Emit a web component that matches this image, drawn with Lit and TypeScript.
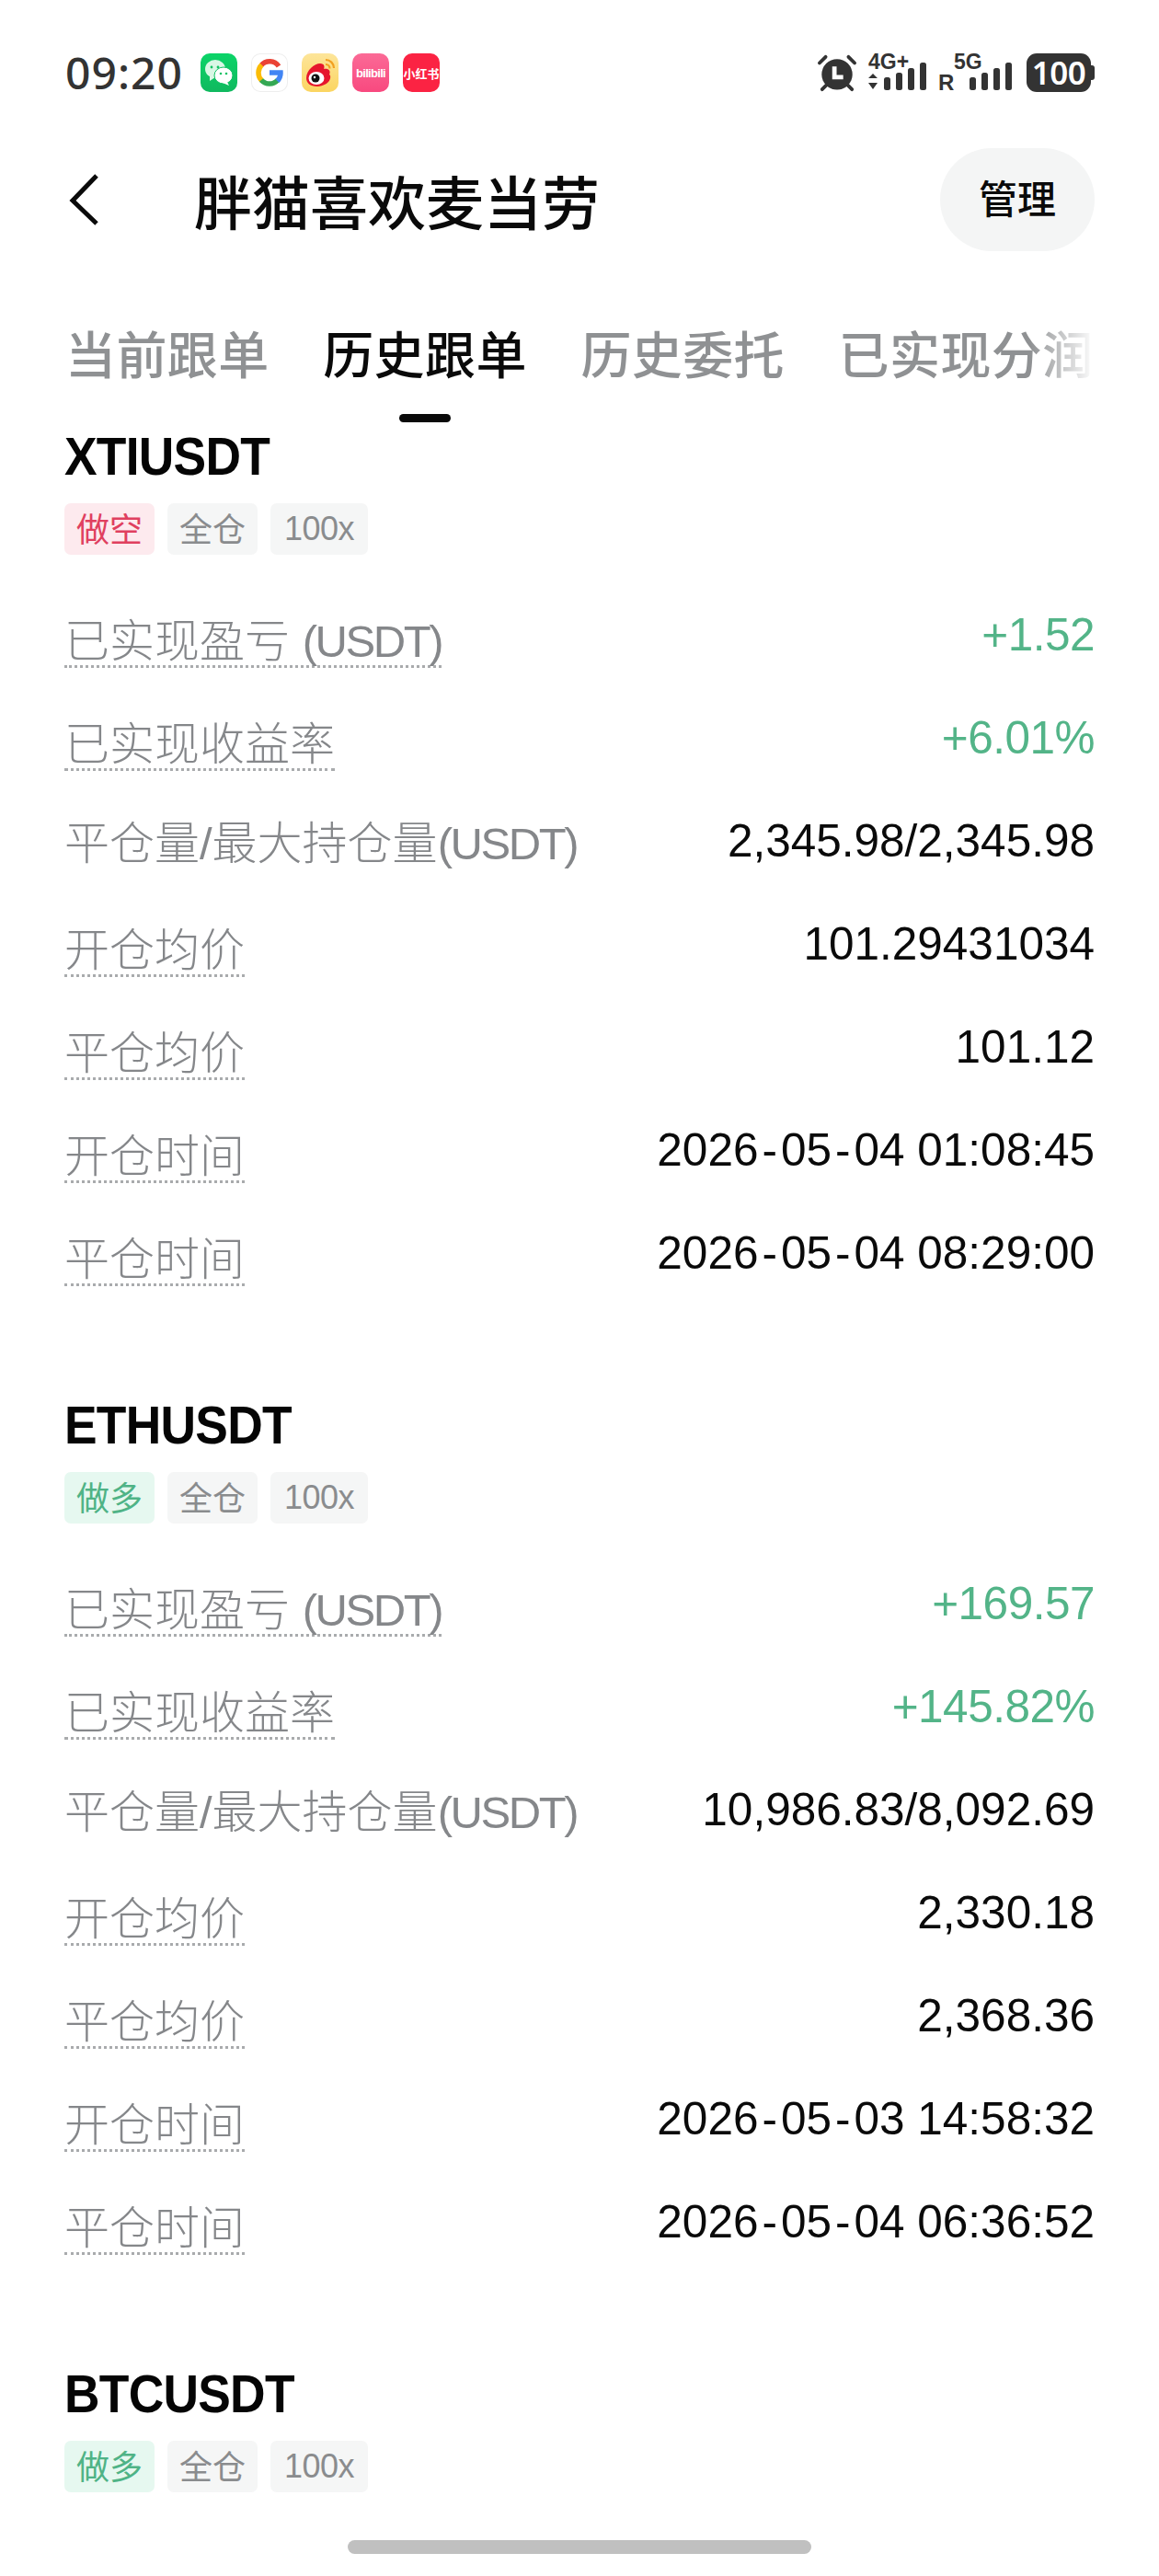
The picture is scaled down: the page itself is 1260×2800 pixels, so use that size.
import { LitElement, html, css, svg } from "lit";
import { customElement } from "lit/decorators.js";

type Row = { label: string; unit?: string; value: string; dotted?: boolean; green?: boolean };
type Card = { symbol: string; side: "long" | "short"; rows: Row[] };

const mk = (a: string, b: string, c: string, d: string, e: string, f: string, g: string): Row[] => [
  { label: "已实现盈亏 ", unit: "(USDT)", value: a, dotted: true, green: true },
  { label: "已实现收益率", value: b, dotted: true, green: true },
  { label: "平仓量/最大持仓量", unit: "(USDT)", value: c },
  { label: "开仓均价", value: d, dotted: true },
  { label: "平仓均价", value: e, dotted: true },
  { label: "开仓时间", value: f, dotted: true },
  { label: "平仓时间", value: g, dotted: true },
];

const CARDS: Card[] = [
  { symbol: "XTIUSDT", side: "short", rows: mk("+1.52", "+6.01%", "2,345.98/2,345.98", "101.29431034", "101.12", "2026-05-04 01:08:45", "2026-05-04 08:29:00") },
  { symbol: "ETHUSDT", side: "long", rows: mk("+169.57", "+145.82%", "10,986.83/8,092.69", "2,330.18", "2,368.36", "2026-05-03 14:58:32", "2026-05-04 06:36:52") },
  { symbol: "BTCUSDT", side: "long", rows: [] },
];

const TABS = ["当前跟单", "历史跟单", "历史委托", "已实现分润"];

const bars = svg`<rect x="0" y="14" width="7" height="14" rx="2.5"/><rect x="13" y="9" width="7" height="19" rx="2.5"/><rect x="26" y="4" width="7" height="24" rx="2.5"/><rect x="39" y="-2" width="7" height="30" rx="2.5"/>`;

@customElement("app-root")
export class AppRoot extends LitElement {
  static styles = css`
    :host { display: block; position: relative; width: 1260px; height: 2800px; overflow: hidden; background: #fff;
      font-family: "Liberation Sans", "Noto Sans CJK SC", sans-serif; color: #0a0a0a; }
    .status { display: flex; align-items: center; height: 46px; padding: 56px 70px 0 71px; }
    .time { font-family: "Noto Sans", "Liberation Sans", sans-serif; font-size: 48px; font-weight: 500; color: #333; letter-spacing: 1px; line-height: 46px; width: 147px; }
    .apps { display: flex; gap: 15px; }
    .app { width: 40px; height: 42px; border-radius: 10px; display: flex; align-items: center; justify-content: center; overflow: hidden; }
    .app svg { display: block; }
    .wechat { background: linear-gradient(#0bd468, #10b95f); }
    .google { background: #fff; box-shadow: inset 0 0 0 1px #eee; }
    .weibo { background: linear-gradient(#fde59a, #fbd561); }
    .bili { background: linear-gradient(#fb6a96, #f8497f); color: #fff; font-size: 13px; font-weight: 700; letter-spacing: -0.7px; }
    .xhs { background: #fb2343; color: #fff; font-size: 13px; font-weight: 700; font-family: "Noto Sans CJK SC", sans-serif; white-space: nowrap; }
    .spacer { flex: 1; }
    .sys { display: flex; align-items: center; }
    .sys svg { display: block; fill: #333; overflow: visible; }
    .sys text { font-family: "Liberation Sans", sans-serif; font-weight: 700; fill: #333; }
    .batt { display: flex; align-items: center; margin-left: 12px; }
    .batt-body { width: 70px; height: 42px; border-radius: 11px; background: #333; color: #fff; font-family: "Noto Sans", sans-serif; font-size: 35px; font-weight: 600; line-height: 42px; text-align: center; letter-spacing: -0.5px; }
    .batt-tip { width: 4px; height: 16px; background: #333; border-radius: 0 3px 3px 0; }

    .head { display: flex; align-items: center; padding: 59px 70px 0 75px; }
    .back { width: 36px; height: 56px; display: block; }
    .title { margin-left: 100px; font-family: "Noto Sans CJK SC", sans-serif; font-size: 63px; font-weight: 500; line-height: 112px; color: #0a0a0a; }
    .manage { margin-left: auto; width: 168px; height: 112px; border-radius: 56px; background: #f4f5f5; display: flex; align-items: center; justify-content: center; font-family: "Noto Sans CJK SC", sans-serif; font-size: 42px; font-weight: 500; padding-bottom: 7px; box-sizing: border-box; }

    .tabs { display: flex; gap: 58.6px; margin: 69px 70px 0 71px; overflow: hidden; position: relative; height: 118px; white-space: nowrap; }
    .tab { font-family: "Noto Sans CJK SC", sans-serif; font-size: 55px; letter-spacing: 0.4px; line-height: 80px; font-weight: 500; color: #8f9193; flex: none; position: relative; height: 117px; }
    .tab.on { color: #0a0a0a; }
    .tab.on::after { content: ""; position: absolute; left: 50%; bottom: 0; width: 56px; height: 9px; margin-left: -28px; border-radius: 5px; background: #0a0a0a; }
    .fade { position: absolute; right: 0; top: 0; bottom: 0; width: 70px; background: linear-gradient(90deg, rgba(255,255,255,0), #fff); }

    .list { padding: 0 70px 0 70px; }
    .card { height: 1053px; }
    .sym { font-size: 58px; font-weight: 700; line-height: 60px; color: #050505; letter-spacing: -0.8px; padding-top: 6px; transform: scaleX(0.92); transform-origin: left center; }
    .tags { display: flex; gap: 14px; margin-top: 21px; }
    .tag { height: 56px; border-radius: 7px; padding: 0 13px; background: #f5f6f6; color: #8a8c8e; font-size: 36px; line-height: 52px; font-family: "Noto Sans CJK SC", "Liberation Sans", sans-serif; }
    .tag.lat { font-family: "Liberation Sans", sans-serif; line-height: 56px; padding: 0 15px; letter-spacing: -0.5px; }
    .tag.short { background: #fdeaee; color: #e0405f; }
    .tag.long { background: #e6f8f0; color: #4fb386; }
    .rows { margin-top: 34px; }
    .row { display: flex; justify-content: space-between; align-items: flex-start; height: 112px; }
    .lab { font-family: "Liberation Sans", "Noto Sans CJK SC", sans-serif; font-size: 49px; font-weight: 300; line-height: 60px; color: #85878a; margin-top: 30px; white-space: nowrap; }
    .lab.dot { border-bottom: 3px dotted #a9abad; height: 56px; }
    .lab:not(.dot) { margin-top: 26px; }
    .unit { letter-spacing: -2.4px; }
    .val { font-size: 49.5px; line-height: 60px; color: #0a0a0a; margin-top: 23px; white-space: nowrap; }
    .val.green { color: #53b488; letter-spacing: -0.5px; }
    .hy { padding: 0 4px; }
    .home { position: absolute; left: 378px; top: 2761px; width: 504px; height: 15px; border-radius: 8px; background: #c0c0c0; }
  `;

  private alarm() {
    return html`<svg width="42" height="44" viewBox="0 0 44 44">
      <circle cx="22" cy="24" r="17.5"/>
      <path d="M2 11 L9 4 M42 11 L35 4 M5 41 L10 36 M39 41 L34 36" stroke="#333" stroke-width="4" stroke-linecap="round" fill="none"/>
      <path d="M19 15 V27 H29" stroke="#fff" stroke-width="5" fill="none"/>
    </svg>`;
  }

  private value(v: string) {
    const parts = v.split("-");
    if (parts.length < 2) return v;
    return parts.map((p, i) => (i === 0 ? p : html`<span class="hy">-</span>${p}`));
  }

  render() {
    return html`
      <div class="status">
        <div class="time">09:20</div>
        <div class="apps">
          <div class="app wechat"><svg width="32" height="30" viewBox="0 0 32 30">
            <ellipse cx="12" cy="11" rx="11" ry="10" fill="#d9f7e5"/><path d="M6 18 L6 24 L12 20Z" fill="#d9f7e5"/>
            <ellipse cx="21" cy="18" rx="10" ry="9" fill="#fff" stroke="#12c264" stroke-width="1"/><path d="M25 25 L27 29 L20 26Z" fill="#fff"/>
            <circle cx="8" cy="9" r="1.4" fill="#12c264"/><circle cx="15" cy="9" r="1.4" fill="#12c264"/>
            <circle cx="18" cy="16" r="1.3" fill="#12c264"/><circle cx="24" cy="16" r="1.3" fill="#12c264"/>
          </svg></div>
          <div class="app google"><svg width="30" height="30" viewBox="0 0 30 30" fill="none" stroke-width="5.5">
            <path d="M25 8 A12 12 0 0 0 6 7" stroke="#ea4335"/>
            <path d="M6.5 6.5 A12 12 0 0 0 6.5 23.5" stroke="#fbbc05"/>
            <path d="M6 23 A12 12 0 0 0 24 23" stroke="#34a853"/>
            <path d="M23.5 24 A12 12 0 0 0 27 15 H15" stroke="#4285f4"/>
          </svg></div>
          <div class="app weibo"><svg width="36" height="36" viewBox="0 0 36 36">
            <path d="M3 24 C3 15 12 8 18 8 C23 8 23 12 22 14 C27 13 30 16 28 20 C31 22 29 32 15 33 C7 33 3 29 3 24Z" fill="#e6162d"/>
            <ellipse cx="14" cy="24" rx="8.5" ry="7" fill="#fff"/><circle cx="13" cy="24" r="4.5" fill="#111"/><circle cx="12" cy="23" r="1.2" fill="#fff"/>
            <path d="M24 4 A9 9 0 0 1 33 13 M24 9 A4.5 4.5 0 0 1 28.5 13.5" fill="none" stroke="#f2a01f" stroke-width="2.2"/>
          </svg></div>
          <div class="app bili">bilibili</div>
          <div class="app xhs">小红书</div>
        </div>
        <div class="spacer"></div>
        <div class="sys">
          ${this.alarm()}
          <svg width="64" height="44" viewBox="0 0 64 44" style="margin-left:13px">
            <text x="0" y="18" font-size="23">4G+</text>
            <path d="M5 23 L10 28 H0Z M5 40 L0 33 H10Z"/>
            <g transform="translate(17,13)">${bars}</g>
          </svg>
          <svg width="84" height="44" viewBox="0 0 84 44" style="margin-left:12px">
            <text x="0" y="41" font-size="24">R</text>
            <text x="17" y="18" font-size="23">5G</text>
            <g transform="translate(34,13)">${bars}</g>
          </svg>
          <div class="batt"><div class="batt-body">100</div><div class="batt-tip"></div></div>
        </div>
      </div>

      <div class="head">
        <svg class="back" viewBox="0 0 36 56"><path d="M30 2 L4 29 L30 54" fill="none" stroke="#0a0a0a" stroke-width="5"/></svg>
        <div class="title">胖猫喜欢麦当劳</div>
        <div class="manage">管理</div>
      </div>

      <div class="tabs">
        ${TABS.map((t, i) => html`<div class="tab ${i === 1 ? "on" : ""}">${t}</div>`)}
        <div class="fade"></div>
      </div>

      <div class="list">
        ${CARDS.map((c) => html`
          <div class="card">
            <div class="sym">${c.symbol}</div>
            <div class="tags">
              <div class="tag ${c.side}">${c.side === "short" ? "做空" : "做多"}</div>
              <div class="tag">全仓</div>
              <div class="tag lat">100x</div>
            </div>
            <div class="rows">
              ${c.rows.map((r) => html`
                <div class="row">
                  <div class="lab ${r.dotted ? "dot" : ""}">${r.label}${r.unit ? html`<span class="unit">${r.unit}</span>` : ""}</div>
                  <div class="val ${r.green ? "green" : ""}">${this.value(r.value)}</div>
                </div>`)}
            </div>
          </div>`)}
      </div>
      <div class="home"></div>
    `;
  }
}
